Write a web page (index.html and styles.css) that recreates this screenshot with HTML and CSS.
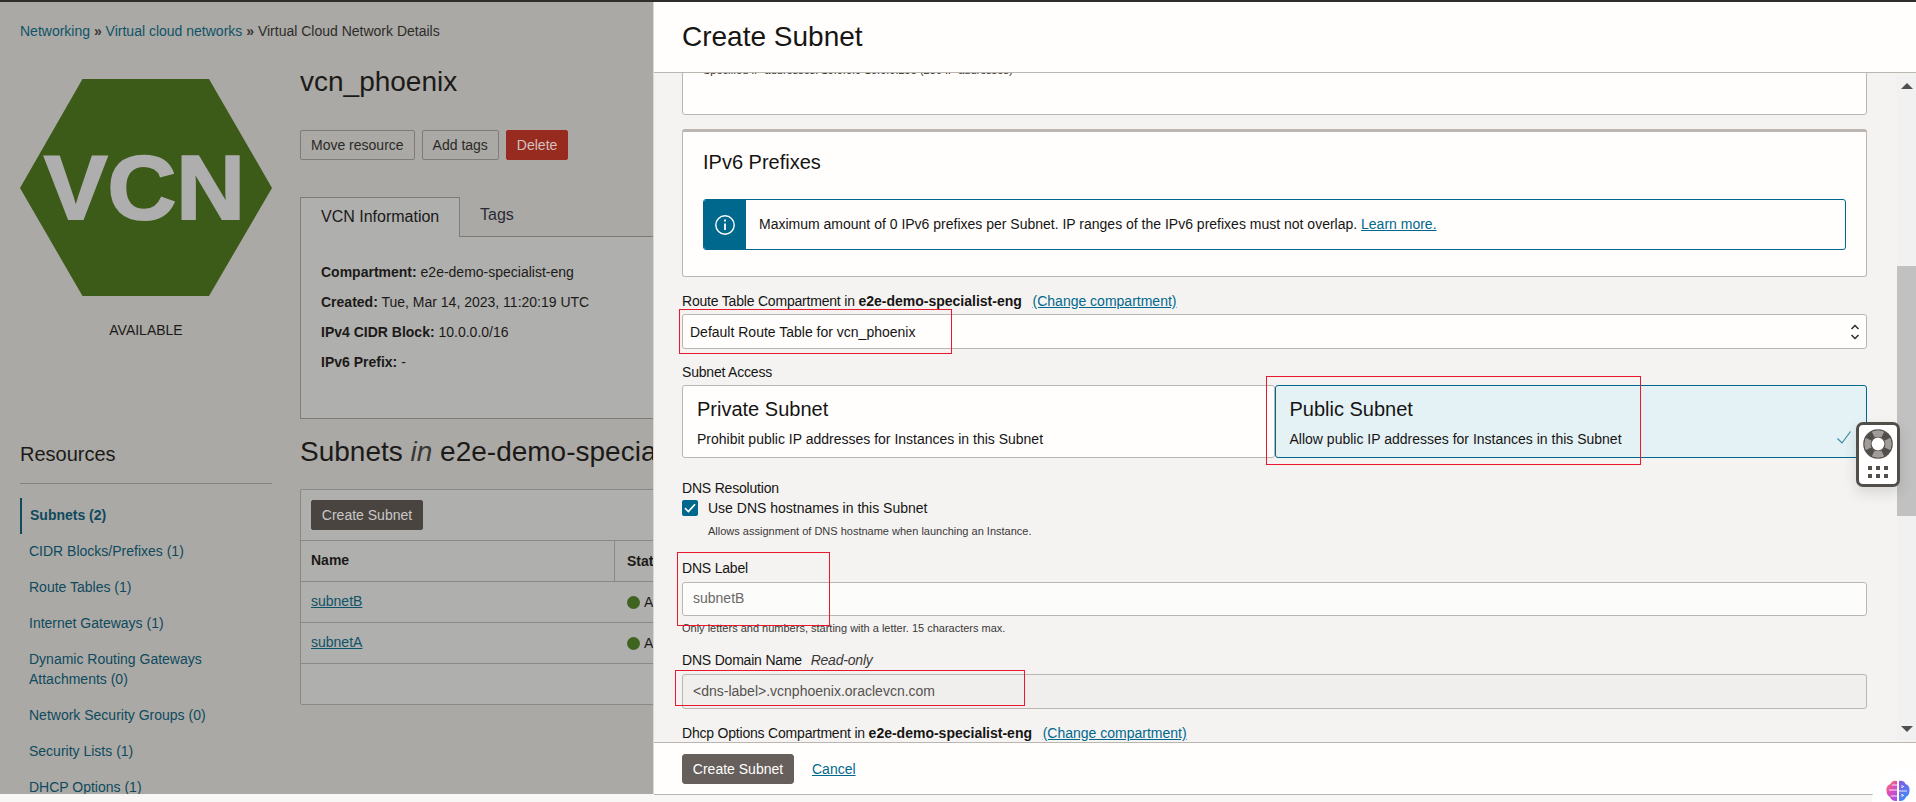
FILE: index.html
```html
<!DOCTYPE html>
<html>
<head>
  <meta charset="UTF-8">
  <title>Create Subnet</title>
  <link rel="stylesheet" href="styles.css">
</head>
<body>
  <div class="topbar"></div>
  <div class="app">

    <!-- page behind the drawer, dimmed -->
    <div class="page">
      <div class="crumbs">
        <a>Networking</a> <span class="sep">»</span> <a>Virtual cloud networks</a> <span class="sep">»</span> Virtual Cloud Network Details
      </div>

      <div class="detail">
        <div class="side">
          <svg class="hex" width="252" height="217" viewBox="0 0 252 217">
            <polygon points="62.5,0 189,0 252,109 189,217 62.5,217 0,109" fill="#3c5a18"/>
            <text x="24" y="140" textLength="201" lengthAdjust="spacingAndGlyphs" class="hex-text">VCN</text>
          </svg>
          <div class="state">AVAILABLE</div>
        </div>
        <div class="main">
          <h1 class="res-title">vcn_phoenix</h1>
          <div class="actions">
            <button class="btn">Move resource</button>
            <button class="btn">Add tags</button>
            <button class="btn btn-danger">Delete</button>
          </div>
          <div class="tabs">
            <div class="tab tab-active">VCN Information</div>
            <div class="tab">Tags</div>
          </div>
          <div class="tab-panel">
            <p><b>Compartment:</b> e2e-demo-specialist-eng</p>
            <p><b>Created:</b> Tue, Mar 14, 2023, 11:20:19 UTC</p>
            <p><b>IPv4 CIDR Block:</b> 10.0.0.0/16</p>
            <p><b>IPv6 Prefix:</b> -</p>
          </div>
        </div>
      </div>

      <div class="detail lower">
        <div class="side">
          <h3 class="res-head">Resources</h3>
          <ul class="res-nav">
            <li class="active">Subnets (2)</li>
            <li>CIDR Blocks/Prefixes (1)</li>
            <li>Route Tables (1)</li>
            <li>Internet Gateways (1)</li>
            <li>Dynamic Routing Gateways Attachments (0)</li>
            <li>Network Security Groups (0)</li>
            <li>Security Lists (1)</li>
            <li>DHCP Options (1)</li>
          </ul>
        </div>
        <div class="main">
          <h2 class="list-title">Subnets <i>in</i> e2e-demo-specialist-eng Compartment</h2>
          <div class="table-box">
            <div class="toolbar"><button class="btn btn-dark">Create Subnet</button></div>
            <div class="row row-head"><div class="col-name">Name</div><div class="col-state">State</div></div>
            <div class="row"><div class="col-name"><a>subnetB</a></div><div class="col-state"><span class="dot"></span>Available</div></div>
            <div class="row"><div class="col-name"><a>subnetA</a></div><div class="col-state"><span class="dot"></span>Available</div></div>
            <div class="table-foot"></div>
          </div>
        </div>
      </div>
    </div>

    <!-- drawer -->
    <div class="drawer">
      <div class="drawer-head">Create Subnet</div>
      <div class="drawer-body">
        <div class="form">
          <div class="card card-clip">
            <div class="small-text">Specified IP addresses: 10.0.0.0-10.0.0.255 (256 IP addresses)</div>
          </div>

          <div class="card card-prefix">
            <h3 class="card-title">IPv6 Prefixes</h3>
            <div class="info">
              <div class="info-icon">
                <svg width="20" height="20" viewBox="0 0 20 20" fill="none" stroke="#fff">
                  <circle cx="10" cy="10" r="9.2" stroke-width="1.4"/>
                  <path d="M10 8.600v6.400" stroke-width="1.800"/>
                  <path d="M10 4.600v2" stroke-width="1.800"/>
                </svg>
              </div>
              <div class="info-text">Maximum amount of 0 IPv6 prefixes per Subnet. IP ranges of the IPv6 prefixes must not overlap. <a>Learn more.</a></div>
            </div>
          </div>

          <div class="label m-route">Route Table Compartment in <b>e2e-demo-specialist-eng</b> <a class="change">(Change compartment)</a></div>
          <div class="select">
            Default Route Table for vcn_phoenix
            <svg class="select-arrows" width="10" height="16" viewBox="0 0 10 16" fill="none" stroke="#312d2a" stroke-width="1.5">
              <path d="M1.500 5 5 1.500 8.500 5"/>
              <path d="M1.500 11 5 14.500 8.500 11"/>
            </svg>
          </div>

          <div class="label m-access">Subnet Access</div>
          <div class="choices">
            <div class="choice">
              <div class="choice-title">Private Subnet</div>
              <div class="choice-desc">Prohibit public IP addresses for Instances in this Subnet</div>
            </div>
            <div class="choice choice-on">
              <div class="choice-title">Public Subnet</div>
              <div class="choice-desc">Allow public IP addresses for Instances in this Subnet</div>
              <svg class="choice-check" width="14" height="13" viewBox="0 0 14 13" fill="none" stroke="#2f86a6" stroke-width="1.1">
                <path d="M.5 7.500 5 12 13.500.5"/>
              </svg>
            </div>
          </div>

          <div class="label m-dns">DNS Resolution</div>
          <div class="check-row">
            <span class="checkbox">
              <svg width="12" height="10" viewBox="0 0 12 10" fill="none" stroke="#fff" stroke-width="1.7"><path d="M1 5.200 4.400 8.600 11 1.200"/></svg>
            </span>
            Use DNS hostnames in this Subnet
          </div>
          <div class="hint hint-check">Allows assignment of DNS hostname when launching an Instance.</div>

          <div class="label m-dnslabel">DNS Label</div>
          <div class="input m-input">subnetB</div>
          <div class="hint hint-input">Only letters and numbers, starting with a letter. 15 characters max.</div>

          <div class="label m-domain">DNS Domain Name <i class="ro">Read-only</i></div>
          <div class="input input-ro">&lt;dns-label&gt;.vcnphoenix.oraclevcn.com</div>

          <div class="label m-dhcp">Dhcp Options Compartment in <b>e2e-demo-specialist-eng</b> <a class="change">(Change compartment)</a></div>
        </div>
        <div class="scrollbar">
          <span class="arrow-up"></span>
          <span class="thumb"></span>
          <span class="arrow-down"></span>
        </div>
      </div>
      <div class="drawer-foot">
        <button class="btn btn-primary">Create Subnet</button>
        <a class="cancel">Cancel</a>
      </div>
    </div>
  </div>

  <!-- red annotation boxes -->
  <div class="mark mark-route"></div>
  <div class="mark mark-public"></div>
  <div class="mark mark-label"></div>
  <div class="mark mark-domain"></div>

  <div class="help">
    <svg width="30" height="30" viewBox="0 0 30 30">
      <circle cx="15" cy="15" r="14" fill="#fff" stroke="#524e4a" stroke-width="1.6"/>
      <circle cx="15" cy="15" r="10.500" fill="none" stroke="#a09c98" stroke-width="6"/>
      <circle cx="15" cy="15" r="10.500" fill="none" stroke="#524e4a" stroke-width="7" pathLength="360" stroke-dasharray="36 54" stroke-dashoffset="-27"/>
      <circle cx="15" cy="15" r="7" fill="#fff" stroke="#524e4a" stroke-width="1.200"/>
    </svg>
    <div class="help-grid"><i></i><i></i><i></i><i></i><i></i><i></i></div>
  </div>

  <div class="brain">
    <svg width="24" height="22" viewBox="0 0 24 22">
      <defs>
        <linearGradient id="lobeL" x1="0" y1="0" x2="0.6" y2="1"><stop offset="0" stop-color="#f6913f"/><stop offset=".5" stop-color="#e04fb4"/><stop offset="1" stop-color="#b24be0"/></linearGradient>
        <linearGradient id="lobeR" x1="0" y1="0" x2="0.4" y2="1"><stop offset="0" stop-color="#8a56e6"/><stop offset="1" stop-color="#3f8cf5"/></linearGradient>
      </defs>
      <path d="M11 1C8 0 5 1.500 4.500 4 1.500 5 0 8 .5 11c0 3 1.500 5 3.500 6 1 3 4 4.500 7 4z" fill="url(#lobeL)"/>
      <path d="M13 1c3-1 6 .5 6.500 3 3 1 4.500 4 4 7 0 3-1.500 5-3.500 6-1 3-4 4.500-7 4z" fill="url(#lobeR)"/>
      <path d="M3 10h8M6 5h5M5 16h6M13 11h8M18 6l-2 2v-3M18 16l-2-2v3" fill="none" stroke="#f3e6fb" stroke-width="1"/>
    </svg>
  </div>
</body>
</html>
```

FILE: styles.css
```css
* { box-sizing: border-box; }
html, body { margin: 0; height: 802px; overflow: hidden; }
body { font-family: "Liberation Sans", Arial, sans-serif; font-size: 14px; line-height: 20px; background: #f8f7f5; color: #161513; position: relative; }
a { color: #0f5368; }
button { font-family: inherit; font-size: 14px; }
p, h1, h2, h3, ul { margin: 0; padding: 0; font-weight: normal; }

.topbar { height: 2px; background: #312d2a; }
.app { display: flex; height: 792px; }

/* dimmed page */
.page { width: 654px; flex: none; background: #aaa9a5; padding: 19px 0 0 20px; overflow: hidden; color: #1c1a18; border-right: 1px solid #d9d8d6; }
.crumbs { color: #2e2c2a; }
.crumbs a { color: #0f5368; }
.sep { font-weight: bold; color: #3a3836; }
.detail { display: flex; width: 900px; margin-top: 24px; }
.detail.lower { margin-top: 16px; }
.side { width: 252px; flex: none; margin-right: 28px; }
.main { width: 600px; flex: none; }
.hex { display: block; margin-top: 14px; }
.hex-text { font: bold 90px "Liberation Sans", Arial, sans-serif; fill: #aeaeae; stroke: #aeaeae; stroke-width: 2px; }
.state { margin-top: 24px; text-align: center; }

.res-title { font-size: 28px; line-height: 34px; }
.actions { display: flex; gap: 7px; margin-top: 31px; }
.btn { height: 30px; padding: 0 10px; border: 1px solid #7f7c78; border-radius: 2px; background: transparent; color: #2b2927; }
.btn-danger { background: #982b1f; border-color: #982b1f; color: #d3c3c0; }
.btn-dark { background: #4a4441; border-color: #4a4441; color: #c9c8c6; width: 112px; padding: 0; }

.tabs { display: flex; height: 40px; margin-top: 37px; border-bottom: 1px solid #7f7c78; font-size: 16px; }
.tab { padding: 0 20px; line-height: 36px; white-space: nowrap; color: #2b2a3a; }
.tab-active { width: 160px; background: #afafad; border: 1px solid #7f7c78; border-bottom: 0; height: 40px; line-height: 38px; color: #1c1a18; }
.tab-panel { height: 182px; padding: 25px 20px 0; background: #afafad; border: 1px solid #7f7c78; border-top: 0; }
.tab-panel p { margin-bottom: 10px; }

.res-head { font-size: 20px; line-height: 26px; margin-top: 6px; padding-bottom: 16px; border-bottom: 1px solid #85837f; }
.res-nav { list-style: none; margin-top: 14px; color: #0f4a5e; }
.res-nav li { padding: 7px 40px 9px 9px; }
.res-nav .active { font-weight: bold; padding-left: 8px; border-left: 2px solid #0f4a5e; }
.list-title { font-size: 28px; line-height: 34px; white-space: nowrap; }
.list-title i { color: #3a3836; }
.table-box { margin-top: 20px; height: 216px; background: #afafad; border: 1px solid #8b8985; border-radius: 2px; }
.toolbar { height: 51px; padding: 10px; border-bottom: 1px solid #8b8985; }
.row { display: flex; height: 41px; border-bottom: 1px solid #8b8985; align-items: center; }
.row a { text-decoration: underline; }
.row-head { font-weight: bold; }
.col-name { width: 314px; height: 100%; padding: 9px 10px; }
.row-head .col-name { border-right: 1px solid #8b8985; }
.col-state { padding-left: 12px; display: flex; align-items: center; }
.dot { width: 13px; height: 13px; border-radius: 50%; background: #3f6420; margin-right: 4px; }

/* drawer */
.drawer { flex: 1; display: flex; flex-direction: column; height: 793px; background: #f4f3f2; }
.drawer-head { height: 71px; padding: 0 28px; background: #fffefd; border-bottom: 1px solid #bcb6b1; font-size: 28px; line-height: 70px; flex: none; }
.drawer-body { flex: 1; display: flex; overflow: hidden; min-height: 0; }
.drawer-foot { height: 53px; flex: none; display: flex; align-items: center; gap: 18px; padding: 0 28px; background: #fffefd; border-top: 1px solid #bcb6b1; border-bottom: 1px solid #bcb6b1; }
.btn-primary { width: 112px; padding: 0; background: #665f5b; border-color: #665f5b; color: #fff; border-radius: 3px; }
.cancel { text-decoration: underline; color: #00688c; }

.form { width: 1243px; flex: none; margin-top: -20px; padding: 0 30px 0 28px; }
.scrollbar { flex: 1; position: relative; background: #f1f1f1; display: flex; flex-direction: column; align-items: center; }
.arrow-up { margin-top: 10px; border: 6px solid transparent; border-top: 0; border-bottom: 6px solid #505050; }
.thumb { position: absolute; top: 193px; left: 0; right: 0; height: 250px; background: #c1c1c1; }
.arrow-down { position: absolute; bottom: 10px; border: 6px solid transparent; border-bottom: 0; border-top: 6px solid #505050; }

.card { background: #fffefd; border: 1px solid #bcb6b1; border-radius: 3px; }
.card-clip { height: 62px; padding: 8px 20px 0; }
.small-text { font-size: 11px; line-height: 16px; color: #2b2927; }
.card-prefix { height: 148px; margin-top: 14px; border-top-width: 3px; padding: 16px 20px 0; }
.card-title { font-size: 20px; line-height: 28px; }
.info { display: flex; align-items: center; height: 51px; margin-top: 23px; border: 1px solid #00688c; border-radius: 3px; background: #fffefd; overflow: hidden; }
.info-icon { width: 42px; height: 51px; flex: none; background: #00688c; display: flex; align-items: center; justify-content: center; }
.info-text { padding-left: 13px; padding-bottom: 1px; }
.info-text a { color: #00688c; text-decoration: underline; }

.label { line-height: 20px; letter-spacing: -0.2px; }
.label b { font-weight: bold; letter-spacing: 0; }
.change { margin-left: 7px; color: #00688c; text-decoration: underline; letter-spacing: 0; }
.m-route { margin-top: 14px; }
.m-access { margin-top: 13px; }
.m-dns { margin-top: 20px; }
.m-dnslabel { margin-top: 19px; }
.m-domain { margin-top: 15px; }
.m-dhcp { margin-top: 14px; }
.ro { margin-left: 5px; color: #3a3836; }

.select { position: relative; height: 35px; margin-top: 3px; padding: 0 7px; line-height: 34px; background: #fffefd; border: 1px solid #bcb6b1; border-radius: 3px; }
.select-arrows { position: absolute; top: 9px; right: 6px; }

.choices { display: flex; margin-top: 3px; }
.choice { position: relative; flex: 1; height: 73px; padding: 11px 14px 0; background: #fffefd; border: 1px solid #bcb6b1; border-radius: 3px; }
.choice-on { background: #e4f1f5; border-color: #00688c; }
.choice-title { font-size: 20px; line-height: 24px; }
.choice-desc { margin-top: 8px; }
.choice-check { position: absolute; right: 15px; bottom: 13px; }

.check-row { display: flex; align-items: center; gap: 10px; height: 16px; margin-top: 2px; }
.checkbox { width: 16px; height: 16px; border-radius: 2px; background: #00688c; display: flex; align-items: center; justify-content: center; }
.hint { font-size: 11px; color: #3a3836; }
.hint-check { margin-top: 7px; padding-left: 26px; line-height: 16px; }
.hint-input { margin-top: 5px; line-height: 14px; }
.input { height: 34px; margin-top: 4px; padding: 0 10px; line-height: 31px; background: #fcfcfb; border: 1px solid #bcb6b1; border-radius: 3px; color: #6b6966; }
.input-ro { height: 35px; line-height: 32px; background: #f0efed; color: #55524f; }

/* overlays */
.mark { position: absolute; border: 1px solid #e8192c; }
.mark-route { left: 679px; top: 309px; width: 273px; height: 45px; }
.mark-public { left: 1266px; top: 376px; width: 375px; height: 89px; }
.mark-label { left: 677px; top: 552px; width: 153px; height: 74px; }
.mark-domain { left: 675px; top: 670px; width: 350px; height: 36px; }

.help { position: absolute; left: 1856px; top: 422px; width: 44px; height: 65px; padding-top: 4px; background: #fff; border: 3px solid #524e4a; border-radius: 7px; box-shadow: 0 6px 14px rgba(0, 0, 0, .12); display: flex; flex-direction: column; align-items: center; }
.help-grid { display: grid; grid-template-columns: repeat(3, 4px); gap: 4px; margin-top: 7px; }
.help-grid i { height: 4px; background: #524e4a; }

.brain { position: absolute; left: 1872px; top: 769px; width: 64px; height: 64px; border-radius: 50%; background: #fff; padding: 11px 0 0 14px; }
```
